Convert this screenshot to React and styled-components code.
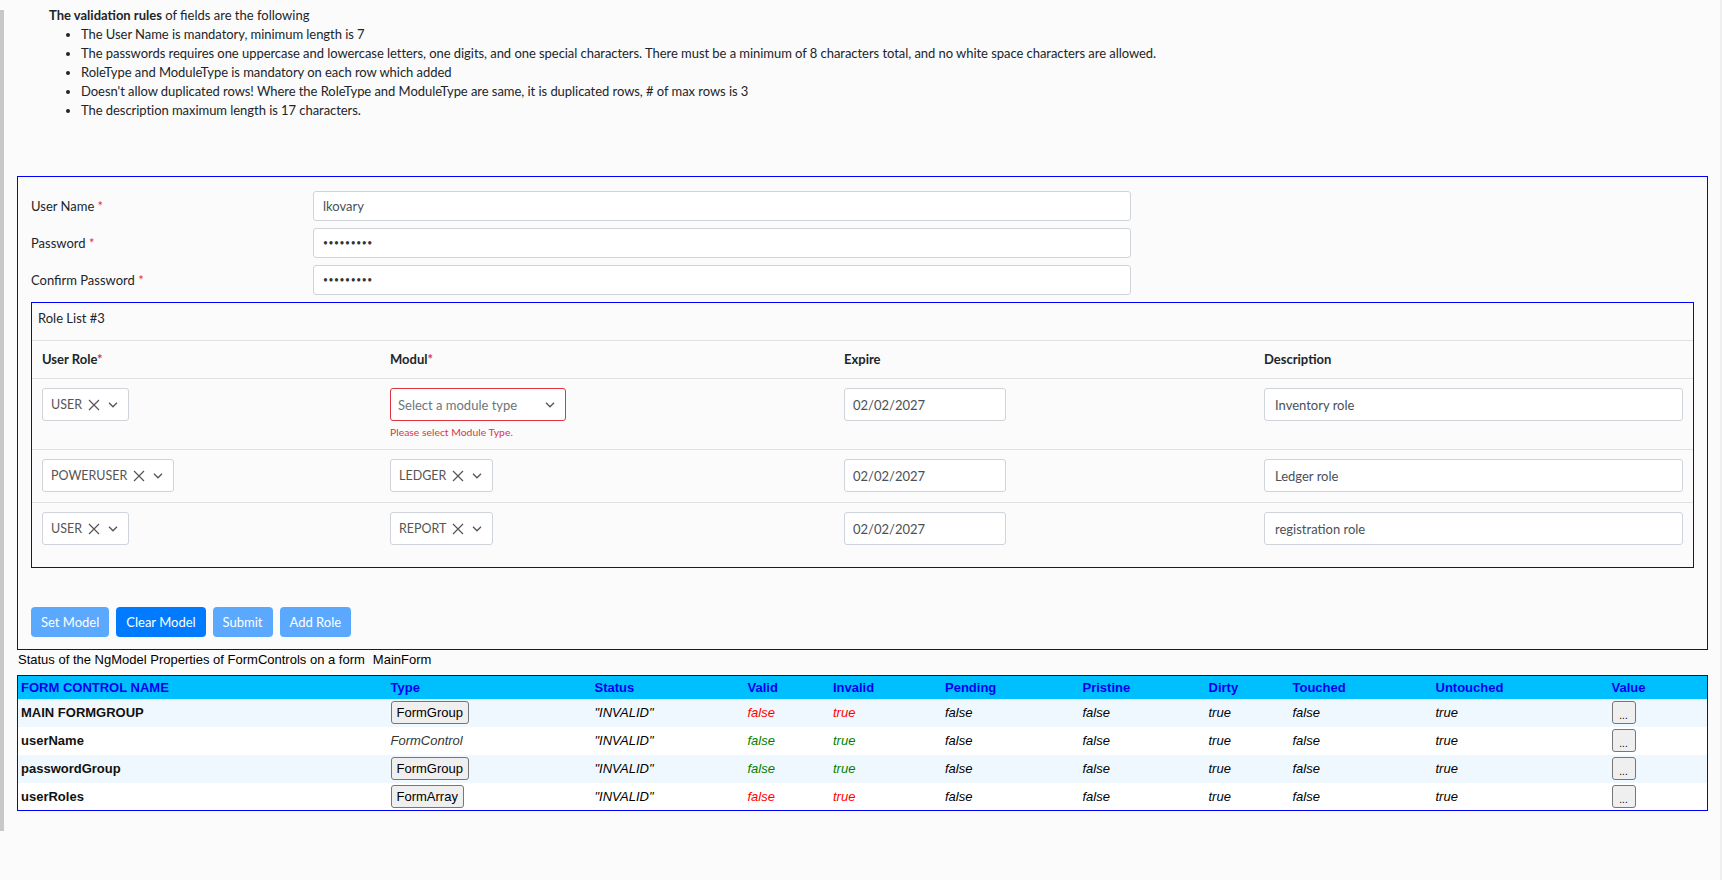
import React from "react";
import styled, { createGlobalStyle } from "styled-components";

const GlobalStyle = createGlobalStyle`
	html, body {
		margin: 0;
		background: #fbfbfb;
	}
	body {
		font-family: Lato, "Open Sans", sans-serif;
		font-size: 13px;
		color: #212529;
	}
	* {
		box-sizing: border-box;
	}
`;

const rules = [
	"The User Name is mandatory, minimum length is 7",
	"The passwords requires one uppercase and lowercase letters, one digits, and one special characters. There must be a minimum of 8 characters total, and no white space characters are allowed.",
	"RoleType and ModuleType is mandatory on each row which added",
	"Doesn't allow duplicated rows! Where the RoleType and ModuleType are same, it is duplicated rows, # of max rows is 3",
	"The description maximum length is 17 characters.",
];

const roles = [
	{ role: "USER", module: null, expire: "02/02/2027", desc: "Inventory role" },
	{ role: "POWERUSER", module: "LEDGER", expire: "02/02/2027", desc: "Ledger role" },
	{ role: "USER", module: "REPORT", expire: "02/02/2027", desc: "registration role" },
];

const columns = [
	{ label: "FORM CONTROL NAME", w: 370 },
	{ label: "Type", w: 204 },
	{ label: "Status", w: 153 },
	{ label: "Valid", w: 85.5 },
	{ label: "Invalid", w: 112 },
	{ label: "Pending", w: 137.5 },
	{ label: "Pristine", w: 126 },
	{ label: "Dirty", w: 84 },
	{ label: "Touched", w: 143 },
	{ label: "Untouched", w: 176 },
	{ label: "Value" },
];

const controls = [
	{ name: "MAIN FORMGROUP", type: "FormGroup", button: true, tone: "bad" },
	{ name: "userName", type: "FormControl", button: false, tone: "good" },
	{ name: "passwordGroup", type: "FormGroup", button: true, tone: "good" },
	{ name: "userRoles", type: "FormArray", button: true, tone: "bad" },
];

const ClearIcon = () => (
	<svg width="12" height="12" viewBox="0 0 12 12">
		<path d="M1 1 L11 11 M11 1 L1 11" stroke="#555" strokeWidth="1.2" fill="none" />
	</svg>
);

const Chevron = () => (
	<svg width="10" height="6" viewBox="0 0 10 6">
		<path d="M1 0.8 L5 4.8 L9 0.8" stroke="#555" strokeWidth="1.3" fill="none" />
	</svg>
);

const RoleSelect = ({ value, placeholder, error }) => (
	<Select $error={error} $empty={!value}>
		{value ? (
			<>
				<SelectValue>{value}</SelectValue>
				<ClearIcon />
			</>
		) : (
			<Placeholder>{placeholder}</Placeholder>
		)}
		<Chevron />
	</Select>
);

const App = () => {
	return (
		<>
			<GlobalStyle />
			<Page>
				<Rail />
				<Main>
					<Rules>
						<div>
							<b>The validation rules</b> of fields are the following
						</div>
						<RuleList>
							{rules.map((r) => (
								<li key={r}>{r}</li>
							))}
						</RuleList>
					</Rules>

					<FormBox>
						<FieldRow>
							<Label>
								User Name <Req>*</Req>
							</Label>
							<TextInput defaultValue="lkovary" readOnly />
						</FieldRow>
						<FieldRow>
							<Label>
								Password <Req>*</Req>
							</Label>
							<TextInput type="password" defaultValue="Abcdef12!" readOnly />
						</FieldRow>
						<FieldRow>
							<Label>
								Confirm Password <Req>*</Req>
							</Label>
							<TextInput type="password" defaultValue="Abcdef12!" readOnly />
						</FieldRow>

						<RoleCard>
							<CardTitle>Role List #3</CardTitle>
							<RoleGrid>
								<HeadCell>
									User Role<Req>*</Req>
								</HeadCell>
								<HeadCell>
									Modul<Req>*</Req>
								</HeadCell>
								<HeadCell>Expire</HeadCell>
								<HeadCell>Description</HeadCell>
								{roles.map((r, i) => {
									const last = i === roles.length - 1;
									return (
										<React.Fragment key={i}>
											<Cell $last={last}>
												<RoleSelect value={r.role} />
											</Cell>
											<Cell $last={last}>
												<RoleSelect
													value={r.module}
													placeholder="Select a module type"
													error={!r.module}
												/>
												{!r.module && <ErrorText>Please select Module Type.</ErrorText>}
											</Cell>
											<Cell $last={last}>
												<DateInput defaultValue={r.expire} readOnly />
											</Cell>
											<Cell $last={last}>
												<DescInput defaultValue={r.desc} readOnly />
											</Cell>
										</React.Fragment>
									);
								})}
							</RoleGrid>
						</RoleCard>

						<ButtonBar>
							<ActionButton $muted>Set Model</ActionButton>
							<ActionButton>Clear Model</ActionButton>
							<ActionButton $muted>Submit</ActionButton>
							<ActionButton $muted>Add Role</ActionButton>
						</ButtonBar>
					</FormBox>

					<StatusLine>
						Status of the NgModel Properties of FormControls on a form
						<FormName>MainForm</FormName>
					</StatusLine>

					<StatusTable>
						<colgroup>
							{columns.map((c) => (
								<Col key={c.label} $w={c.w} />
							))}
						</colgroup>
						<thead>
							<tr>
								{columns.map((c) => (
									<Th key={c.label}>{c.label}</Th>
								))}
							</tr>
						</thead>
						<tbody>
							{controls.map((c, i) => (
								<Tr key={c.name} $odd={i % 2 === 0}>
									<NameCell>{c.name}</NameCell>
									<Td>
										{c.button ? (
											<TypeButton>{c.type}</TypeButton>
										) : (
											<TypeText>{c.type}</TypeText>
										)}
									</Td>
									<Td $italic>"INVALID"</Td>
									<Td $italic $tone={c.tone}>
										false
									</Td>
									<Td $italic $tone={c.tone}>
										true
									</Td>
									<Td $italic>false</Td>
									<Td $italic>false</Td>
									<Td $italic>true</Td>
									<Td $italic>false</Td>
									<Td $italic>true</Td>
									<Td>
										<DotsButton>...</DotsButton>
									</Td>
								</Tr>
							))}
						</tbody>
					</StatusTable>
				</Main>
				<EdgeRail />
			</Page>
		</>
	);
};

export default App;

const Page = styled.div`
	display: flex;
	min-height: 880px;
`;

const Rail = styled.div`
	width: 4px;
	flex-shrink: 0;
	margin-top: 10px;
	height: 821px;
	background: #c8c8c8;
`;

const EdgeRail = styled.div`
	width: 2px;
	flex-shrink: 0;
	background: #efefef;
`;

const Main = styled.main`
	flex: 1;
	min-width: 0;
	padding: 6px 12px 0 13px;
`;

const Rules = styled.section`
	padding-left: 32px;
	line-height: 19px;
`;

const RuleList = styled.ul`
	margin: 0;
	padding-left: 32px;
	letter-spacing: -0.05px;
`;

const FormBox = styled.form`
	margin-top: 56px;
	border: 1px solid #0000ff;
	padding: 14px 13px 12px;
`;

const FieldRow = styled.div`
	display: grid;
	grid-template-columns: 282px 818px;
	align-items: center;
	height: 30px;
	& + & {
		margin-top: 7px;
	}
`;

const Label = styled.label`
	color: #212529;
`;

const Req = styled.span`
	color: #dc3545;
`;

const baseInput = `
	height: 33px;
	border: 1px solid #ced4da;
	border-radius: 3px;
	background: #fff;
	color: #495057;
	font-family: Lato, "Open Sans", sans-serif;
	font-size: 13px;
	outline: none;
`;

const TextInput = styled.input`
	${baseInput}
	height: 30px;
	padding: 0 9px;
	width: 100%;

	&[type="password"] {
		font-size: 8.5px;
		letter-spacing: 0.6px;
		color: #333;
	}
`;

const RoleCard = styled.div`
	margin-top: 7px;
	border: 1px solid #0000ff;
	padding-bottom: 12px;
`;

const CardTitle = styled.div`
	padding: 6px 6px 12px;
	line-height: 19px;
	border-bottom: 1px solid #dee2e6;
`;

const RoleGrid = styled.div`
	display: grid;
	grid-template-columns: 348px 454px 420px 1fr;
`;

const HeadCell = styled.div`
	padding: 9px 10px;
	line-height: 19px;
	font-weight: 700;
	border-bottom: 1px solid #dee2e6;
`;

const Cell = styled.div`
	padding: 9px 10px 10px;
	border-bottom: ${(p) => (p.$last ? "none" : "1px solid #dee2e6")};
`;

const Select = styled.div`
	${baseInput}
	display: inline-flex;
	align-items: center;
	gap: ${(p) => (p.$empty ? "0" : "6px")};
	justify-content: space-between;
	width: ${(p) => (p.$empty ? "176px" : "auto")};
	padding: ${(p) => (p.$empty ? "0 10px 0 7px" : "0 10px 0 8px")};
	border-color: ${(p) => (p.$error ? "#e0323f" : "#ced4da")};
	font-size: 12.5px;
	color: #555;

	svg:last-child {
		margin-left: ${(p) => (p.$empty ? "0" : "2px")};
	}
`;

const SelectValue = styled.span`
	color: #555;
`;

const Placeholder = styled.span`
	font-size: 13px;
	color: #6c757d;
`;

const ErrorText = styled.div`
	margin-top: 4px;
	font-size: 10.4px;
	line-height: 14px;
	color: #dc3545;
`;

const DateInput = styled.input`
	${baseInput}
	width: 162px;
	padding: 0 8px;
`;

const DescInput = styled.input`
	${baseInput}
	width: 100%;
	padding: 0 10px;
`;

const ButtonBar = styled.div`
	display: flex;
	gap: 7px;
	margin-top: 39px;
`;

const ActionButton = styled.button.attrs({ type: "button" })`
	height: 30px;
	padding: 0 10px;
	border: none;
	border-radius: 4px;
	color: #fff;
	background: ${(p) => (p.$muted ? "#5aa9ff" : "#007bff")};
	font-family: Lato, "Open Sans", sans-serif;
	font-size: 13px;
`;

const StatusLine = styled.div`
	margin-top: 2px;
	padding-left: 1px;
	font-family: "Liberation Sans", Arial, sans-serif;
	font-size: 13px;
	line-height: 15px;
	color: #000;
`;

const FormName = styled.span`
	margin-left: 8px;
`;

const StatusTable = styled.table`
	margin-top: 8px;
	width: 100%;
	border-collapse: collapse;
	table-layout: fixed;
	border: 1px solid #0000ff;
	font-family: "Liberation Sans", Arial, sans-serif;
	font-size: 13px;
	color: #000;
`;

const Col = styled.col`
	width: ${(p) => (p.$w ? `${p.$w}px` : "auto")};
`;

const Th = styled.th`
	height: 23px;
	padding: 0 3px;
	background: #00bfff;
	color: #0000ee;
	text-align: left;
	font-weight: 700;
`;

const Tr = styled.tr`
	background: ${(p) => (p.$odd ? "#f0f8ff" : "#fff")};
`;

const Td = styled.td`
	height: 28px;
	padding: 0 3px;
	font-style: ${(p) => (p.$italic ? "italic" : "normal")};
	color: ${(p) => (p.$tone === "bad" ? "#ff0000" : p.$tone === "good" ? "#008000" : "#000")};
`;

const NameCell = styled.td`
	height: 28px;
	padding: 0 3px;
	font-weight: 700;
	color: #111;
`;

const TypeText = styled.span`
	font-style: italic;
	color: #333;
`;

const TypeButton = styled.button.attrs({ type: "button" })`
	height: 23px;
	padding: 1px 5px;
	border: 1px solid #767676;
	border-radius: 3px;
	background: #efefef;
	font-family: "Liberation Sans", Arial, sans-serif;
	font-size: 13px;
	color: #000;
`;

const DotsButton = styled(TypeButton)`
	width: 24px;
	padding: 6px 0 0;
	font-size: 10px;
`;
